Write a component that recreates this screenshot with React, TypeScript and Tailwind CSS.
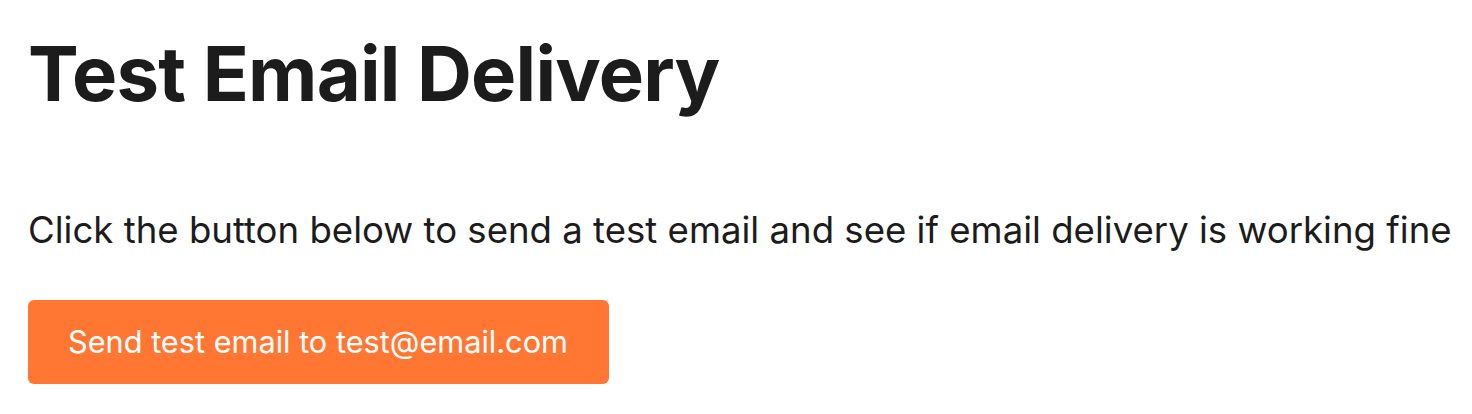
export default function App() {
  return (
    <div className="min-h-screen bg-white px-[28px] pt-[28px] font-['Inter',sans-serif] text-[#1c1c1c]">
      <h1 className="text-[76px] font-bold leading-[1.2] tracking-[-0.01em]">Test Email Delivery</h1>
      <p className="mt-[90px] whitespace-nowrap text-[36.6px] leading-[1.2]">
        Click the button below to send a test email and see if email delivery is working fine
      </p>
      <button className="mt-[47px] h-[84px] w-[581px] rounded-[6px] bg-[#ff7733] px-[40px] text-left text-[30.7px] text-white">
        Send test email to test@email.com
      </button>
    </div>
  )
}
